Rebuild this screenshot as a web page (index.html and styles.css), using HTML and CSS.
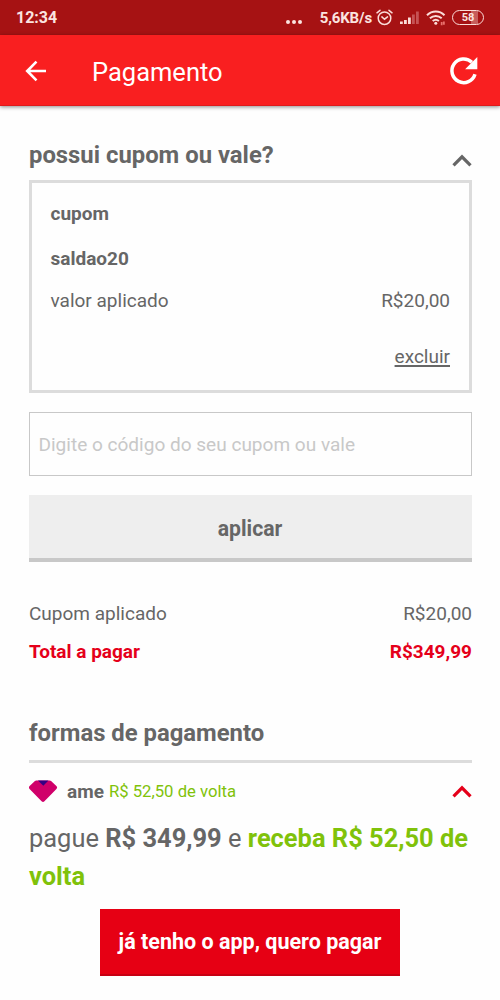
FILE: index.html
```
<!DOCTYPE html>
<html lang="pt-BR">
<head>
<meta charset="utf-8">
<title>Pagamento</title>
<link rel="stylesheet" href="styles.css">
</head>
<body>
<div class="status">
  <span class="clock">12:34</span>
  <svg class="dots" width="18" height="6" viewBox="0 0 18 6" fill="#fbe4e0"><circle cx="3" cy="3" r="2"/><circle cx="9" cy="3" r="2"/><circle cx="15" cy="3" r="2"/></svg>
  <span class="speed">5,6KB/s</span>
  <svg class="alarm" width="17" height="17" viewBox="0 0 17 17" fill="none" stroke="#fbdcd8" stroke-width="1.5" stroke-linecap="round"><circle cx="8.5" cy="9.2" r="6.3"/><path d="M1 3.8 4 1.3M16 3.8 13 1.3M5.9 7.9l2.6 2.3 3-2.3"/></svg>
  <svg class="signal" width="19" height="14" viewBox="0 0 19 14"><path fill="#fbdcd8" d="M0 13v-2.500h2.800V13zM4 13V9h2.800v4zM8 13V6.500h2.800V13z"/><path fill="#c65355" d="M12 13V3.500h2.800V13zM16 13V.5h2.800V13z"/></svg>
  <svg class="wifi" width="20" height="16" viewBox="0 0 20 16" fill="none" stroke="#fbdcd8" stroke-width="2"><path d="M1 5.300C6 .3 13.500.3 18.500 5.300M3.900 8.300c3.500-3.200 8.300-3.200 11.800 0M6.700 11c1.900-1.600 4.300-1.600 6.200 0"/><circle cx="9.800" cy="13.300" r="1.500" fill="#fbdcd8" stroke="none"/><path d="M15.700 12v3.300M17.900 11.500v3.300" stroke="#e8706c" stroke-width="1.800"/></svg>
  <span class="battery">58</span>
</div>
<header class="appbar">
  <svg class="back" width="22" height="22" viewBox="0 0 22 22" fill="none" stroke="#fff" stroke-width="2.600"><path d="M21 11H2.500M11.500 1.700 2.200 11l9.300 9.300"/></svg>
  <h1 class="title">Pagamento</h1>
  <svg class="reload" width="30" height="30" viewBox="0 0 30 30"><path fill="none" stroke="#fff" stroke-width="3.500" d="M26 18.300A11.800 11.800 0 1 1 22.900 6.300"/><path fill="#fff" d="M28.300 1v12.200H16.100z"/></svg>
</header>
<main class="content">
  <div class="section-head coupon-head">
    <h2 class="heading">possui cupom ou vale?</h2>
    <svg class="chevron" width="20" height="13" viewBox="0 0 20 13" fill="none" stroke="#666" stroke-width="3.200"><path d="m1.500 11.300 8.500-8.500 8.500 8.500"/></svg>
  </div>
  <section class="coupon">
    <b class="label">cupom</b>
    <b class="code">saldao20</b>
    <div class="row applied"><span>valor aplicado</span><span class="money">R$20,00</span></div>
    <a class="remove">excluir</a>
  </section>
  <div class="field">Digite o código do seu cupom ou vale</div>
  <div class="apply">aplicar</div>
  <div class="row discount"><span>Cupom aplicado</span><span class="money">R$20,00</span></div>
  <div class="row total"><span class="total-label">Total a pagar</span><span class="total-value">R$349,99</span></div>
  <div class="section-head payment-head"><h2 class="heading">formas de pagamento</h2></div>
  <div class="method">
    <svg class="gem" width="29" height="23" viewBox="0 0 29 23"><path fill="#d0006a" stroke="#d0006a" stroke-width="4" stroke-linejoin="round" d="M7.300 2.500h13.400l5.300 5L14 19.800 2 7.500z"/><path fill="#340083" d="M9 .5h10.500l-5.200 5.200z"/></svg>
    <b class="ame">ame</b>
    <span class="cashback">R$ 52,50 de volta</span>
    <svg class="chevron" width="20" height="13" viewBox="0 0 20 13" fill="none" stroke="#e5001a" stroke-width="3.200"><path d="m1.500 11.300 8.500-8.500 8.500 8.500"/></svg>
  </div>
  <p class="offer"><span>pague </span><b>R$ 349,99</b><span> e </span><b class="green">receba R$ 52,50 de</b><br><b class="green">volta</b></p>
  <div class="pay">já tenho o app, quero pagar</div>
</main>
</body>
</html>
```
FILE: styles.css
```
* { box-sizing: border-box; }
body { margin: 0; height: 1000px; overflow: hidden; background: #fefefe; color: #666; font-family: Roboto, sans-serif; font-size: 19px; }
h1, h2, p { margin: 0; }
svg { display: block; flex: none; }

.status { height: 35px; display: flex; align-items: center; padding: 0 16px; background: #a61213; color: #fbe4e0; white-space: nowrap; }
.clock { padding-top: 1px; font-size: 16px; font-weight: 700; letter-spacing: 0; line-height: 20px; }
.dots { margin: 9px 17px 0 auto; }
.speed { padding-top: 1px; font-size: 15px; font-weight: 700; letter-spacing: -.15px; line-height: 20px; }
.alarm { margin-left: 4px; }
.signal { margin: 1px 0 0 7px; }
.wifi { margin-left: 7px; }
.battery { width: 32px; height: 15px; margin-left: 6px; border: 1.500px solid #fbdcd8; border-radius: 8px; background: linear-gradient(90deg, transparent 60%, #c65d5b 60%, #c65d5b 82%, transparent 82%); font-size: 11px; font-weight: 700; line-height: 13px; text-align: center; }

.appbar { position: relative; height: 71px; display: flex; align-items: center; padding: 1px 21px 0 25px; background: #f91f20; border-bottom: 1px solid #df1b1c; box-shadow: 0 1px 4px rgba(0, 0, 0, .45); color: #fff; }
.title { margin-left: 45px; font-size: 25.500px; font-weight: 400; line-height: 30px; padding-top: 2px; }
.reload { margin-left: auto; }

.content { padding: 0 28px 0 29px; }
.section-head { display: flex; align-items: center; justify-content: space-between; }
.coupon-head { height: 74px; padding-top: 24px; }
.coupon-head .chevron { margin-top: 10px; }
.heading { font-size: 23.850px; font-weight: 700; line-height: 30px; }
.row { display: flex; justify-content: space-between; line-height: 24px; }

.coupon { height: 213px; display: flex; flex-direction: column; padding: 19px 19px 0 18.500px; border: 3px solid #dcdcdc; line-height: 24px; }
.code { margin-top: 21px; }
.applied { margin-top: 18px; }
.remove { align-self: flex-end; margin-top: 32px; text-decoration: underline; text-underline-offset: 2px; text-decoration-thickness: 1.500px; }
.field { height: 64px; margin-top: 19px; padding: 0 8.500px; border: 1.500px solid #c8c8c8; color: #c8c8c8; font-size: 19.050px; line-height: 63px; }
.apply { height: 67px; margin-top: 19px; padding-right: 1px; background: #eee; border-bottom: 4px solid #c8c8c8; font-size: 21.200px; font-weight: 700; line-height: 67px; text-align: center; }
.discount { margin-top: 40px; }
.total { margin-top: 14px; color: #e5001a; font-weight: 700; }
.payment-head { height: 99px; padding-top: 42px; border-bottom: 3px solid #dcdcdc; }

.method { height: 56px; display: flex; align-items: center; }
.ame { margin-left: 9px; font-size: 19px; }
.cashback { margin-left: 5px; color: #80c20a; font-size: 16.700px; }
.method .chevron { margin-left: auto; }
.offer { font-size: 25.450px; line-height: 38px; white-space: nowrap; }
.green { color: #80c20a; }
.pay { width: 300px; height: 67px; margin: 14px 0 0 71px; background: #e60014; border-bottom: 2px solid #c70013; color: #fff; font-size: 21.500px; font-weight: 700; line-height: 66px; text-align: center; }
```
